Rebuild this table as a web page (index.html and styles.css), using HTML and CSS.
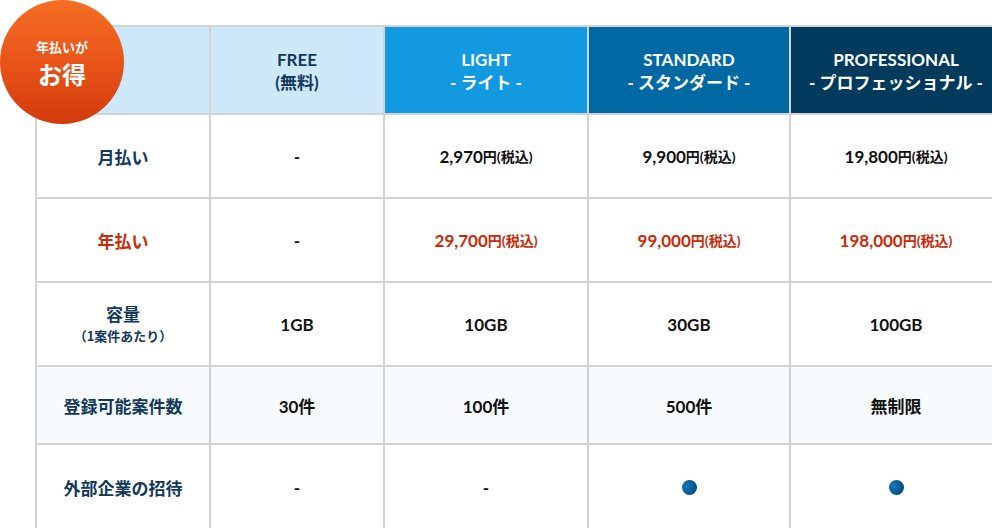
FILE: index.html
```html
<!DOCTYPE html>
<html lang="ja">
<head>
<meta charset="utf-8">
<title>料金プラン</title>
<link rel="stylesheet" href="styles.css">
</head>
<body>
<div class="page">
  <div class="badge">
    <span class="badge-small">年払いが</span>
    <span class="badge-big">お得</span>
  </div>
  <div class="plans">
    <div class="cell head head-blank"></div>
    <div class="cell head head-free"><span>FREE</span><span>(無料)</span></div>
    <div class="cell head head-light"><span>LIGHT</span><span>- ライト -</span></div>
    <div class="cell head head-standard"><span>STANDARD</span><span>- スタンダード -</span></div>
    <div class="cell head head-pro"><span>PROFESSIONAL</span><span>- プロフェッショナル -</span></div>

    <div class="cell label">月払い</div>
    <div class="cell val">-</div>
    <div class="cell val"><span class="num">2,970</span><span class="unit">円(税込)</span></div>
    <div class="cell val"><span class="num">9,900</span><span class="unit">円(税込)</span></div>
    <div class="cell val"><span class="num">19,800</span><span class="unit">円(税込)</span></div>

    <div class="cell label red">年払い</div>
    <div class="cell val">-</div>
    <div class="cell val red"><span class="num">29,700</span><span class="unit">円(税込)</span></div>
    <div class="cell val red"><span class="num">99,000</span><span class="unit">円(税込)</span></div>
    <div class="cell val red"><span class="num">198,000</span><span class="unit">円(税込)</span></div>

    <div class="cell label stack"><span class="main">容量</span><span class="sub">（1案件あたり）</span></div>
    <div class="cell val">1GB</div>
    <div class="cell val">10GB</div>
    <div class="cell val">30GB</div>
    <div class="cell val">100GB</div>

    <div class="cell label tint">登録可能案件数</div>
    <div class="cell val tint">30件</div>
    <div class="cell val tint">100件</div>
    <div class="cell val tint">500件</div>
    <div class="cell val tint">無制限</div>

    <div class="cell label">外部企業の招待</div>
    <div class="cell val">-</div>
    <div class="cell val">-</div>
    <div class="cell val"><span class="dot"></span></div>
    <div class="cell val"><span class="dot"></span></div>
  </div>
</div>
</body>
</html>
```
FILE: styles.css
```css
html, body {
  margin: 0;
  padding: 0;
  overflow: hidden;
  background: #ffffff;
}

body {
  font-family: Lato, "Noto Sans CJK JP", sans-serif;
  font-weight: 700;
  color: #111111;
}

.page {
  position: relative;
  padding: 25px 0 0 35px;
}

.badge {
  position: absolute;
  left: 0;
  top: 0;
  width: 124px;
  height: 124px;
  box-sizing: border-box;
  padding-top: 4px;
  border-radius: 50%;
  background: linear-gradient(180deg, #f56f23 0%, #e9541a 50%, #d23a0a 100%);
  color: #ffffff;
  display: flex;
  flex-direction: column;
  align-items: center;
  justify-content: center;
  z-index: 2;
  font-family: "Noto Sans CJK JP", sans-serif;
}

.badge-small {
  font-size: 13px;
  line-height: 19px;
}

.badge-big {
  font-size: 24px;
  line-height: 35px;
}

.plans {
  display: grid;
  grid-template-columns: 172px 172px 202px 200px 210px;
  grid-template-rows: 86px 82px 82px 82px 76px 84px;
  gap: 2px;
  padding: 2px;
  background: #d3d3d3;
  width: max-content;
}

.cell {
  background: #ffffff;
  display: flex;
  align-items: center;
  justify-content: center;
  text-align: center;
}

.head {
  flex-direction: column;
  font-size: 17px;
  line-height: 23px;
  color: #ffffff;
  padding-top: 1px;
}

.head-blank,
.head-free {
  background: #cde9f9;
  color: #12385c;
}

.head-light {
  background: #1399e0;
}

.head-standard {
  background: #0069a4;
}

.head-pro {
  background: #003a5c;
}

.label {
  font-family: "Noto Sans CJK JP", sans-serif;
  font-size: 17px;
  color: #12385c;
}

.label.red,
.val.red {
  color: #cc2a08;
}

.stack {
  flex-direction: column;
  padding-bottom: 2px;
}

.stack .main {
  line-height: 24px;
}

.sub {
  font-size: 13px;
  line-height: 19px;
}

.val {
  font-size: 17px;
  color: #111111;
}

.num {
  font-size: 17px;
}

.unit {
  font-size: 14px;
}

.tint {
  background: #f7fbfe;
}

.dot {
  display: block;
  width: 15px;
  height: 15px;
  border-radius: 50%;
  background: radial-gradient(circle at 30% 40%, #1577b5 0%, #0a5e98 45%, #003d70 100%);
}
```
